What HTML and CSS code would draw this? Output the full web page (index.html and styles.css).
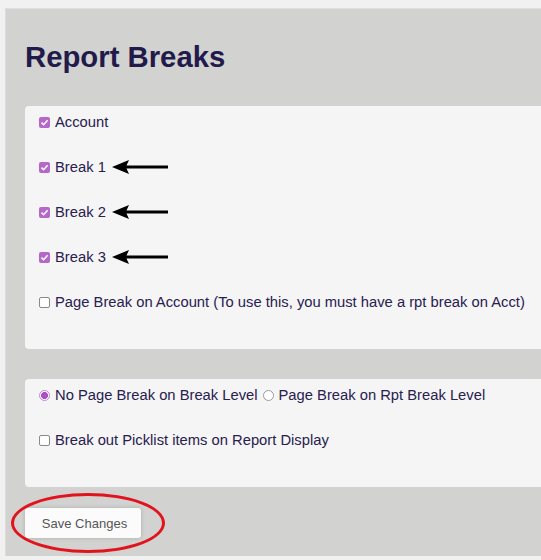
FILE: index.html
```html
<!DOCTYPE html>
<html>
<head>
<meta charset="utf-8">
<link rel="stylesheet" href="styles.css">
</head>
<body>
<div class="panel">
  <h1 class="title">Report Breaks</h1>
  <div class="card">
    <div class="row"><span class="cb on"><svg viewBox="0 0 11 11"><path d="M2.5 5.6 L4.6 7.7 L8.6 3.3" fill="none" stroke="#fff" stroke-width="1.6"/></svg></span><span class="label">Account</span></div>
    <div class="row"><span class="cb on"><svg viewBox="0 0 11 11"><path d="M2.5 5.6 L4.6 7.7 L8.6 3.3" fill="none" stroke="#fff" stroke-width="1.6"/></svg></span><span class="label">Break 1</span><svg class="arrow" viewBox="0 0 56 14"><path d="M0 7 L17 0 L14.5 5.4 L56 5.4 L56 8.6 L14.5 8.6 L17 14 Z" fill="#000"/></svg></div>
    <div class="row"><span class="cb on"><svg viewBox="0 0 11 11"><path d="M2.5 5.6 L4.6 7.7 L8.6 3.3" fill="none" stroke="#fff" stroke-width="1.6"/></svg></span><span class="label">Break 2</span><svg class="arrow" viewBox="0 0 56 14"><path d="M0 7 L17 0 L14.5 5.4 L56 5.4 L56 8.6 L14.5 8.6 L17 14 Z" fill="#000"/></svg></div>
    <div class="row"><span class="cb on"><svg viewBox="0 0 11 11"><path d="M2.5 5.6 L4.6 7.7 L8.6 3.3" fill="none" stroke="#fff" stroke-width="1.6"/></svg></span><span class="label">Break 3</span><svg class="arrow" viewBox="0 0 56 14"><path d="M0 7 L17 0 L14.5 5.4 L56 5.4 L56 8.6 L14.5 8.6 L17 14 Z" fill="#000"/></svg></div>
    <div class="row"><span class="cb"></span><span class="label">Page Break on Account (To use this, you must have a rpt break on Acct)</span></div>
  </div>
  <div class="card">
    <div class="row"><span class="rb on"></span><span class="label">No Page Break on Break Level</span><span class="rb second"></span><span class="label">Page Break on Rpt Break Level</span></div>
    <div class="row"><span class="cb"></span><span class="label">Break out Picklist items on Report Display</span></div>
  </div>
  <div class="actions">
    <button class="btn">Save Changes</button>
    <span class="circle"></span>
  </div>
</div>
</body>
</html>
```
FILE: styles.css
```css
html, body {
  margin: 0;
  padding: 0;
}
body {
  background: #f1f1f1;
  font-family: "Liberation Sans", Arial, sans-serif;
  padding: 8px 0 0 5px;
  overflow: hidden;
  height: 560px;
  box-sizing: border-box;
}
.panel {
  background: #d2d2d0;
  border-top: 1px solid #dedede;
  border-left: 1px solid #dcdcdc;
  height: 548px;
  box-sizing: border-box;
  padding: 31px 0 0 19px;
}
.title {
  margin: 0;
  font-size: 29.3px;
  line-height: 34px;
  font-weight: bold;
  color: #221a4a;
}
.card {
  margin-top: 32px;
  background: #f5f5f5;
  border-radius: 4px 0 0 4px;
  padding: 6px 0 37px 14px;
  display: flex;
  flex-direction: column;
  gap: 25px;
}
.card + .card {
  margin-top: 30px;
}
.row {
  height: 20px;
  display: flex;
  align-items: center;
  font-size: 14.75px;
  color: #28204f;
  white-space: nowrap;
}
.label {
  margin-left: 5px;
}
.cb {
  width: 11px;
  height: 11px;
  box-sizing: border-box;
  border: 1px solid #8a8a8a;
  border-radius: 2px;
  background: #fff;
  flex: none;
  display: flex;
}
.cb.on {
  border: none;
  background: #b468c9;
}
.cb svg {
  width: 11px;
  height: 11px;
}
.rb {
  width: 11px;
  height: 11px;
  box-sizing: border-box;
  border: 1px solid #9a9a9a;
  border-radius: 50%;
  background: #fff;
  flex: none;
}
.rb.on {
  border: 1px solid #c08ad0;
  background: radial-gradient(circle, #ac4fc4 0 3.2px, #fff 3.8px);
}
.rb.second {
  margin-left: 5px;
}
.arrow {
  width: 56px;
  height: 14px;
  margin-left: 6px;
  flex: none;
}
.actions {
  position: relative;
  margin-top: 21px;
}
.btn {
  width: 116px;
  height: 30px;
  background: #fbfbfb;
  border: none;
  border-radius: 3px;
  box-shadow: 0 0 4px rgba(0, 0, 0, 0.18);
  font-family: "Liberation Sans", Arial, sans-serif;
  font-size: 13px;
  color: #565656;
  padding: 0 0 0 3px;
}
.circle {
  position: absolute;
  left: -14px;
  top: -15px;
  width: 154px;
  height: 60px;
  box-sizing: border-box;
  border: 3px solid #e0141c;
  border-radius: 50%;
}
```
